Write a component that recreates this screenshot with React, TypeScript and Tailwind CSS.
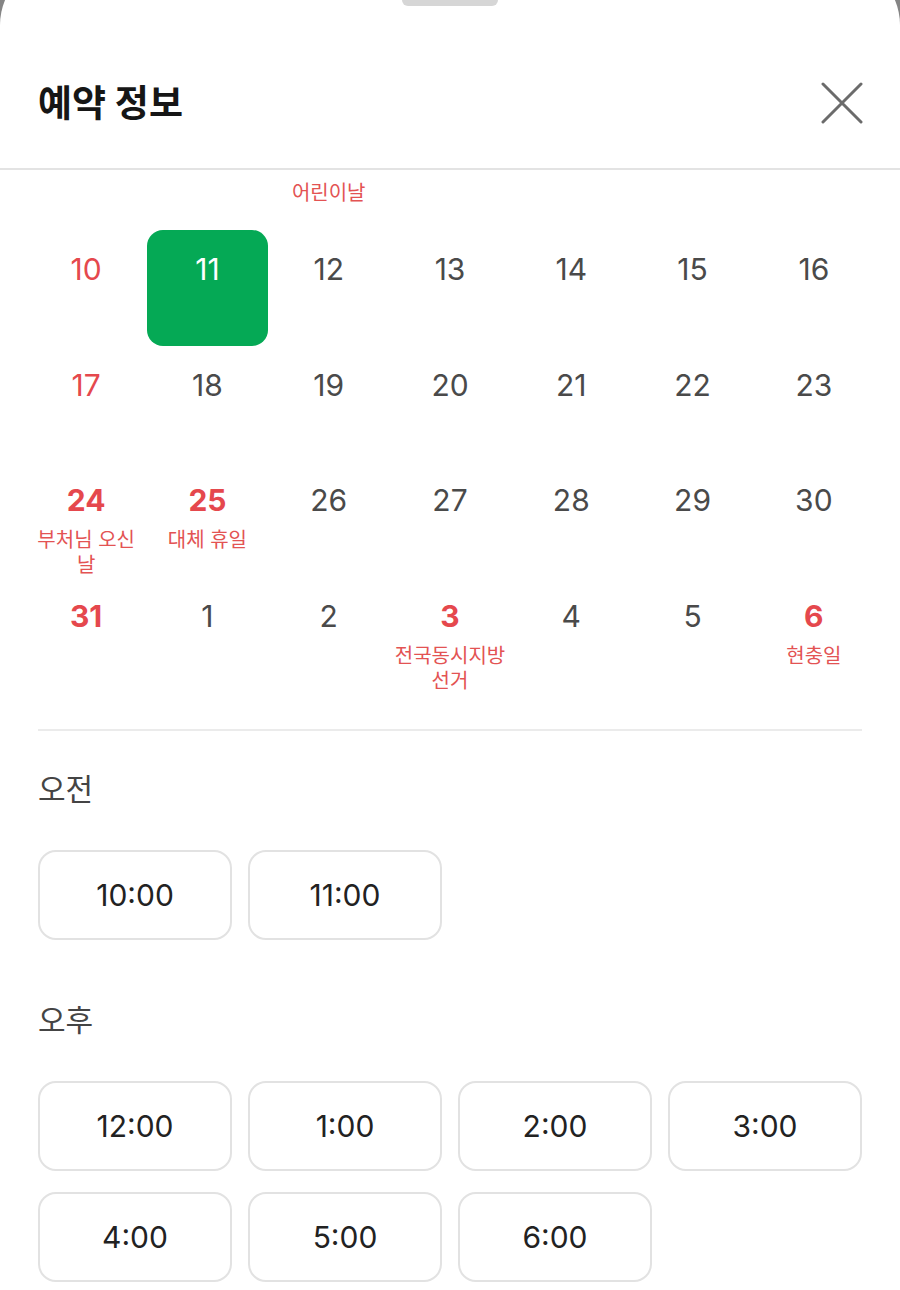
import React from 'react'

type Day = { d: number; red?: boolean; bold?: boolean; label?: string[] }

// the week of 3–9 is scrolled up under the header: only its labels still show
const partialLabels: (string | null)[] = [null, null, '어린이날', null, null, null, null]

const weeks: Day[][] = [
  [
    { d: 10, red: true },
    { d: 11 },
    { d: 12 },
    { d: 13 },
    { d: 14 },
    { d: 15 },
    { d: 16 },
  ],
  [
    { d: 17, red: true },
    { d: 18 },
    { d: 19 },
    { d: 20 },
    { d: 21 },
    { d: 22 },
    { d: 23 },
  ],
  [
    { d: 24, red: true, bold: true, label: ['부처님 오신', '날'] },
    { d: 25, red: true, bold: true, label: ['대체 휴일'] },
    { d: 26 },
    { d: 27 },
    { d: 28 },
    { d: 29 },
    { d: 30 },
  ],
  [
    { d: 31, red: true, bold: true },
    { d: 1 },
    { d: 2 },
    { d: 3, red: true, bold: true, label: ['전국동시지방', '선거'] },
    { d: 4 },
    { d: 5 },
    { d: 6, red: true, bold: true, label: ['현충일'] },
  ],
]

const morning = ['10:00', '11:00']
const afternoon = ['12:00', '1:00', '2:00', '3:00', '4:00', '5:00', '6:00']

const SELECTED = 11

export default function App() {
  return (
    <div className="h-[1290px] w-[900px] overflow-hidden bg-[#858585] font-['Inter','Noto_Sans_CJK_KR',sans-serif]">
      <div className="-mt-[40px] h-[1340px] rounded-t-[65px] bg-white pt-[34px]">
        <div className="mx-auto h-[12px] w-[96px] rounded-full bg-[#d6d6d6]" />

        <div className="mt-[32px] flex h-[132px] items-center justify-between border-b-2 border-[#e3e3e3] pl-[38px] pr-[36px]">
          <h1 className="text-[37px] font-bold leading-none text-[#161616]">예약 정보</h1>
          <button className="flex h-[44px] w-[44px] items-center justify-center">
            <svg width="42" height="42" viewBox="0 0 42 42" fill="none">
              <path d="M2 2L40 40M40 2L2 40" stroke="#6b6b6b" strokeWidth="3" strokeLinecap="round" />
            </svg>
          </button>
        </div>

        <div className="px-[25.5px]">
          <div className="grid h-[60px] grid-cols-7">
            {partialLabels.map((l, j) => (
              <div key={j} className="pt-[11px] text-center text-[20px] leading-[25px] text-[#e35353]">
                {l}
              </div>
            ))}
          </div>
          {weeks.map((w, i) => (
            <div key={i} className="grid h-[115.5px] grid-cols-7">
              {w.map((day, j) => (
                <DayCell key={j} day={day} selected={i === 0 && day.d === SELECTED} />
              ))}
            </div>
          ))}
        </div>

        <div className="mx-[38px] mt-[37px] border-t-2 border-[#ebebeb]" />

        <div className="px-[38px]">
          <h2 className="mt-[38px] text-[30px] leading-[40px] text-[#444]">오전</h2>
          <div className="mt-[41px] grid grid-cols-4 gap-x-[16px] gap-y-[21px]">
            {morning.map((t) => (
              <TimeSlot key={t} t={t} />
            ))}
          </div>

          <h2 className="mt-[60px] text-[30px] leading-[40px] text-[#444]">오후</h2>
          <div className="mt-[41px] grid grid-cols-4 gap-x-[16px] gap-y-[21px]">
            {afternoon.map((t) => (
              <TimeSlot key={t} t={t} />
            ))}
          </div>
        </div>
      </div>
    </div>
  )
}

function DayCell({ day, selected }: { day: Day; selected: boolean }) {
  const color = selected ? 'text-white' : day.red ? 'text-[#e5484d]' : 'text-[#4a4a4a]'
  return (
    <div className={`flex flex-col items-center pt-[21px] ${selected ? 'rounded-[16px] bg-[#05a955]' : ''}`}>
      <span className={`text-[30px] leading-[36px] ${color} ${day.bold ? 'font-bold' : 'font-normal'}`}>{day.d}</span>
      {day.label && (
        <div className="mt-[10px] text-center text-[20px] leading-[25px] text-[#e35353]">
          {day.label.map((l) => (
            <div key={l}>{l}</div>
          ))}
        </div>
      )}
    </div>
  )
}

function TimeSlot({ t }: { t: string }) {
  return (
    <button className="flex h-[90px] items-center justify-center rounded-[18px] border-2 border-[#e2e2e2] bg-white text-[30px] text-[#222]">
      {t}
    </button>
  )
}
